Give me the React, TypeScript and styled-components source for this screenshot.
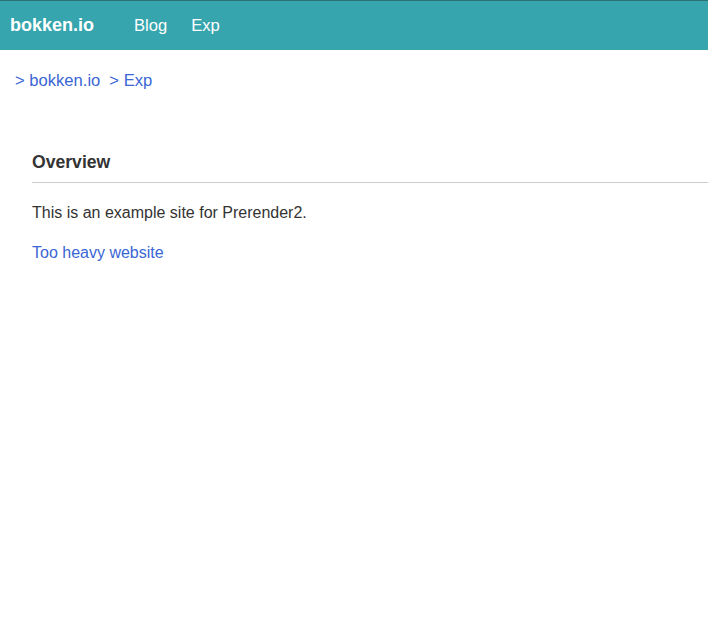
import React from "react";
import styled, { createGlobalStyle } from "styled-components";

const Global = createGlobalStyle`
  html, body { margin: 0; padding: 0; background: #fff; }
  body { font-family: "Liberation Sans", Arial, Helvetica, sans-serif; color: #333; }
  a { text-decoration: none; }
`;

const Header = styled.header`
  height: 49px;
  background: #36a5ae;
  border-top: 1px solid #2c6f75;
  display: flex;
  align-items: center;
  padding: 0 10px;
`;

const Brand = styled.a`
  color: #fff;
  font-weight: bold;
  font-size: 18px;
  margin-right: 40px;
`;

const NavLink = styled.a`
  color: #fff;
  font-size: 16.6px;
  margin-right: 24px;
`;

const Crumbs = styled.nav`
  display: flex;
  gap: 9px;
  padding: 22px 15px 0;
  font-size: 16.6px;
  line-height: 18px;
`;

const Crumb = styled.a`
  color: #3a66d4;
`;

const Main = styled.main`
  padding: 62px 0 0 32px;
`;

const Title = styled.h2`
  margin: 0;
  font-size: 17.6px;
  font-weight: bold;
  color: #333;
  line-height: 20px;
  padding-bottom: 10px;
  border-bottom: 1px solid #cccccc;
`;

const Para = styled.p`
  margin: 21px 0 0;
  font-size: 16px;
  line-height: 18px;
  color: #333;
`;

const Link = styled.a`
  display: block;
  margin-top: 22px;
  font-size: 16px;
  line-height: 18px;
  color: #3a66d4;
`;

export default function App() {
  return (
    <>
      <Global />
      <Header>
        <Brand href="#">bokken.io</Brand>
        <NavLink href="#">Blog</NavLink>
        <NavLink href="#">Exp</NavLink>
      </Header>
      <Crumbs>
        <Crumb href="#">&gt; bokken.io</Crumb>
        <Crumb href="#">&gt; Exp</Crumb>
      </Crumbs>
      <Main>
        <Title>Overview</Title>
        <Para>This is an example site for Prerender2.</Para>
        <Link href="#">Too heavy website</Link>
      </Main>
    </>
  );
}
